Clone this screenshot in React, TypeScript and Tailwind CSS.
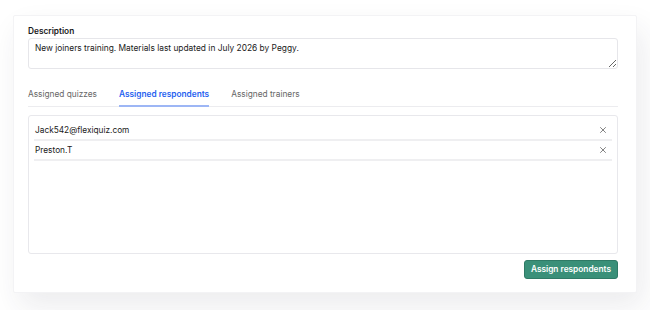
import { X } from "lucide-react";

const tabs = ["Assigned quizzes", "Assigned respondents", "Assigned trainers"];
const respondents = ["Jack542@flexiquiz.com", "Preston.T"];

export default function App() {
  return (
    <div className="w-[650px] h-[310px] bg-white pt-[15px] pl-[13px] overflow-hidden" style={{ fontFamily: "Inter, 'Noto Sans', sans-serif" }}>
      <div className="w-[624px] h-[278px] bg-white rounded-[2px] border border-[#f3f3f5] shadow-[6px_14px_30px_rgba(40,40,70,0.09)] px-[14px] pt-[8px]">
        <label className="block text-[8.3px] font-semibold text-[#1a1a1a] leading-[14px]">Description</label>
        <textarea
          className="block w-[590px] h-[31px] border border-[#e6e6ea] rounded-[3px] px-[6px] py-[2px] text-[8.4px] leading-[14px] text-[#1a1a1a] resize-y outline-none"
          defaultValue="New joiners training. Materials last updated in July 2026 by Peggy."
        />
        <div className="mt-[19px] w-[590px] flex gap-[22px] border-b border-[#ececef] text-[8.3px] leading-[12px]">
          {tabs.map((t, i) => (
            <div
              key={t}
              className={
                i === 1
                  ? "pb-[5px] font-semibold text-[#1f5ff0] border-b-2 border-[#9db6f5] -mb-px"
                  : "pb-[5px] text-[#666]"
              }
            >
              {t}
            </div>
          ))}
        </div>
        <div className="mt-[8px] w-[590px] h-[139px] border border-[#e8e8ec] rounded-[3px] px-[5px] pt-[5px]">
          {respondents.map((r) => (
            <div key={r} className="flex items-center justify-between h-[20px] border-b-2 border-[#efeff1] pl-[1px] pr-[4px] text-[8.3px] text-[#1a1a1a]">
              <span>{r}</span>
              <X size={10} strokeWidth={1.6} className="text-[#444]" />
            </div>
          ))}
        </div>
        <div className="mt-[6px] w-[590px] flex justify-end">
          <button className="h-[19px] px-[6px] rounded-[3px] bg-[#3a9079] border border-[#2f7a66] text-white text-[8.3px] font-semibold">
            Assign respondents
          </button>
        </div>
      </div>
    </div>
  );
}
